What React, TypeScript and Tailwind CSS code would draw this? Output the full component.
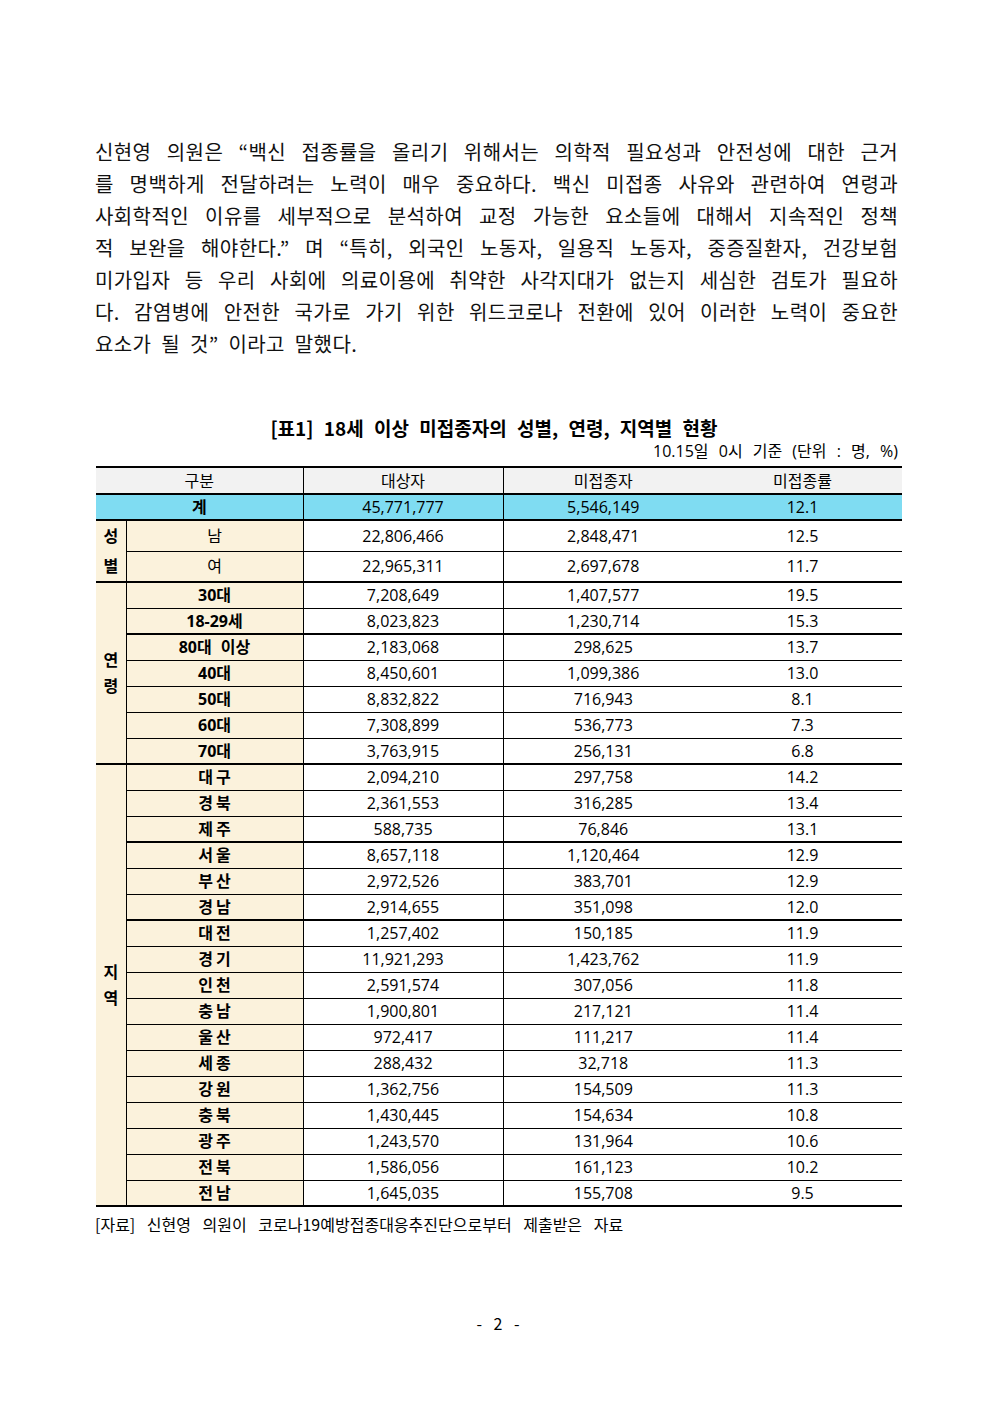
import React from "react";

const paraLines = [
  "신현영 의원은 “백신 접종률을 올리기 위해서는 의학적 필요성과 안전성에 대한 근거",
  "를 명백하게 전달하려는 노력이 매우 중요하다. 백신 미접종 사유와 관련하여 연령과",
  "사회학적인 이유를 세부적으로 분석하여 교정 가능한 요소들에 대해서 지속적인 정책",
  "적 보완을 해야한다.” 며 “특히, 외국인 노동자, 일용직 노동자, 중증질환자, 건강보험",
  "미가입자 등 우리 사회에 의료이용에 취약한 사각지대가 없는지 세심한 검토가 필요하",
  "다. 감염병에 안전한 국가로 가기 위한 위드코로나 전환에 있어 이러한 노력이 중요한",
];

type Row = { label: string; total: string; unvax: string; rate: string; thick?: boolean };

const ages: Row[] = [
  { label: "30대", total: "7,208,649", unvax: "1,407,577", rate: "19.5" },
  { label: "18-29세", total: "8,023,823", unvax: "1,230,714", rate: "15.3", thick: true },
  { label: "80대 이상", total: "2,183,068", unvax: "298,625", rate: "13.7" },
  { label: "40대", total: "8,450,601", unvax: "1,099,386", rate: "13.0" },
  { label: "50대", total: "8,832,822", unvax: "716,943", rate: "8.1" },
  { label: "60대", total: "7,308,899", unvax: "536,773", rate: "7.3" },
  { label: "70대", total: "3,763,915", unvax: "256,131", rate: "6.8" },
];

const regions: Row[] = [
  { label: "대구", total: "2,094,210", unvax: "297,758", rate: "14.2" },
  { label: "경북", total: "2,361,553", unvax: "316,285", rate: "13.4" },
  { label: "제주", total: "588,735", unvax: "76,846", rate: "13.1", thick: true },
  { label: "서울", total: "8,657,118", unvax: "1,120,464", rate: "12.9" },
  { label: "부산", total: "2,972,526", unvax: "383,701", rate: "12.9" },
  { label: "경남", total: "2,914,655", unvax: "351,098", rate: "12.0", thick: true },
  { label: "대전", total: "1,257,402", unvax: "150,185", rate: "11.9" },
  { label: "경기", total: "11,921,293", unvax: "1,423,762", rate: "11.9" },
  { label: "인천", total: "2,591,574", unvax: "307,056", rate: "11.8" },
  { label: "충남", total: "1,900,801", unvax: "217,121", rate: "11.4" },
  { label: "울산", total: "972,417", unvax: "111,217", rate: "11.4" },
  { label: "세종", total: "288,432", unvax: "32,718", rate: "11.3" },
  { label: "강원", total: "1,362,756", unvax: "154,509", rate: "11.3" },
  { label: "충북", total: "1,430,445", unvax: "154,634", rate: "10.8" },
  { label: "광주", total: "1,243,570", unvax: "131,964", rate: "10.6" },
  { label: "전북", total: "1,586,056", unvax: "161,123", rate: "10.2" },
  { label: "전남", total: "1,645,035", unvax: "155,708", rate: "9.5" },
];

// cell border helpers; the table has no outer left/right rule
const cell = "border-t border-b border-l border-black p-0 text-center align-middle";
const lastCell = "border-t border-b border-black p-0 text-center align-middle";

function GroupRows({
  name,
  rows,
  regionStyle,
}: {
  name: [string, string];
  rows: Row[];
  regionStyle?: boolean;
}) {
  return (
    <>
      {rows.map((r, i) => {
        const bottom = r.thick || i === rows.length - 1 ? "border-b-2" : "";
        return (
          <tr key={r.label} className="h-[26px]">
            {i === 0 && (
              <td
                rowSpan={rows.length}
                className="border-t-2 border-b-2 border-black bg-[#fbf2dc] p-0 text-center align-middle font-bold leading-[26px]"
              >
                {name[0]}
                <br />
                {name[1]}
              </td>
            )}
            <td
              className={`${cell} ${bottom} bg-[#fbf2dc] font-bold ${
                regionStyle ? "tracking-[3px] pl-[3px]" : "[word-spacing:5px]"
              }`}
            >
              {r.label}
            </td>
            <td className={`${cell} ${bottom}`}>{r.total}</td>
            <td className={`${cell} ${bottom}`}>{r.unvax}</td>
            <td className={`${lastCell} ${bottom}`}>{r.rate}</td>
          </tr>
        );
      })}
    </>
  );
}

export default function App() {
  return (
    <div className="w-[992px] min-h-[1403px] bg-white text-black font-['Noto_Sans_CJK_KR',sans-serif]">
      {/* body paragraph */}
      <div className="pl-[95px] pr-[94px] pt-[136px] text-[20px] leading-[32px] tracking-[0.4px] text-[#111]">
        {paraLines.map((l) => (
          <div key={l} className="text-justify [text-align-last:justify]">
            {l}
          </div>
        ))}
        <div className="[word-spacing:5px]">요소가 될 것” 이라고 말했다.</div>
      </div>

      {/* table block */}
      <div className="mt-[55px] pl-[96px] pr-[90px] font-['Open_Sans','Noto_Sans_CJK_KR',sans-serif]">
        <div className="text-center text-[19px] font-bold leading-[26px] pr-[10px] [word-spacing:6px] font-['Noto_Sans_CJK_KR',sans-serif]">
          [표1] 18세 이상 미접종자의 성별, 연령, 지역별 현황
        </div>
        <div className="text-right text-[16px] leading-[20px] pr-[4px] [word-spacing:6px]">
          10.15일 0시 기준 (단위 : 명, %)
        </div>
        <table className="mt-[5px] w-[806px] table-fixed border-collapse text-[16px]">
          <colgroup>
            <col className="w-[30px]" />
            <col className="w-[177px]" />
            <col className="w-[200px]" />
            <col className="w-[200px]" />
            <col className="w-[199px]" />
          </colgroup>
          <tbody>
            <tr className="h-[27px] bg-[#f2f2f2]">
              <td colSpan={2} className="border-t-2 border-b-2 border-black p-0 text-center align-middle">
                구분
              </td>
              <td className={`${cell} border-t-2 border-b-2`}>대상자</td>
              <td className={`${cell} border-t-2 border-b-2`}>미접종자</td>
              <td className={`${lastCell} border-t-2 border-b-2`}>미접종률</td>
            </tr>
            <tr className="h-[26px] bg-[#7fdcf2]">
              <td colSpan={2} className="border-t-2 border-b-2 border-black p-0 text-center align-middle font-semibold">
                계
              </td>
              <td className={`${cell} border-b-2`}>45,771,777</td>
              <td className={`${cell} border-b-2`}>5,546,149</td>
              <td className={`${lastCell} border-b-2`}>12.1</td>
            </tr>
            <tr className="h-[31px]">
              <td
                rowSpan={2}
                className="border-t-2 border-b-2 border-black bg-[#fbf2dc] p-0 text-center align-middle font-bold leading-[30px]"
              >
                성
                <br />별
              </td>
              <td className={`${cell} bg-[#fbf2dc]`}>남</td>
              <td className={cell}>22,806,466</td>
              <td className={cell}>2,848,471</td>
              <td className={lastCell}>12.5</td>
            </tr>
            <tr className="h-[31px]">
              <td className={`${cell} border-b-2 bg-[#fbf2dc]`}>여</td>
              <td className={`${cell} border-b-2`}>22,965,311</td>
              <td className={`${cell} border-b-2`}>2,697,678</td>
              <td className={`${lastCell} border-b-2`}>11.7</td>
            </tr>
            <GroupRows name={["연", "령"]} rows={ages} />
            <GroupRows name={["지", "역"]} rows={regions} regionStyle />
          </tbody>
        </table>
        <div className="mt-[4px] -ml-[1px] text-[16px] leading-[26px] [word-spacing:8px] font-['Noto_Sans_CJK_KR',sans-serif]">
          [자료] 신현영 의원이 코로나19예방접종대응추진단으로부터 제출받은 자료
        </div>
      </div>

      {/* page number */}
      <div className="mt-[74px] text-center text-[16px] leading-[24px] pl-[4px] [word-spacing:8px]">- 2 -</div>
    </div>
  );
}
